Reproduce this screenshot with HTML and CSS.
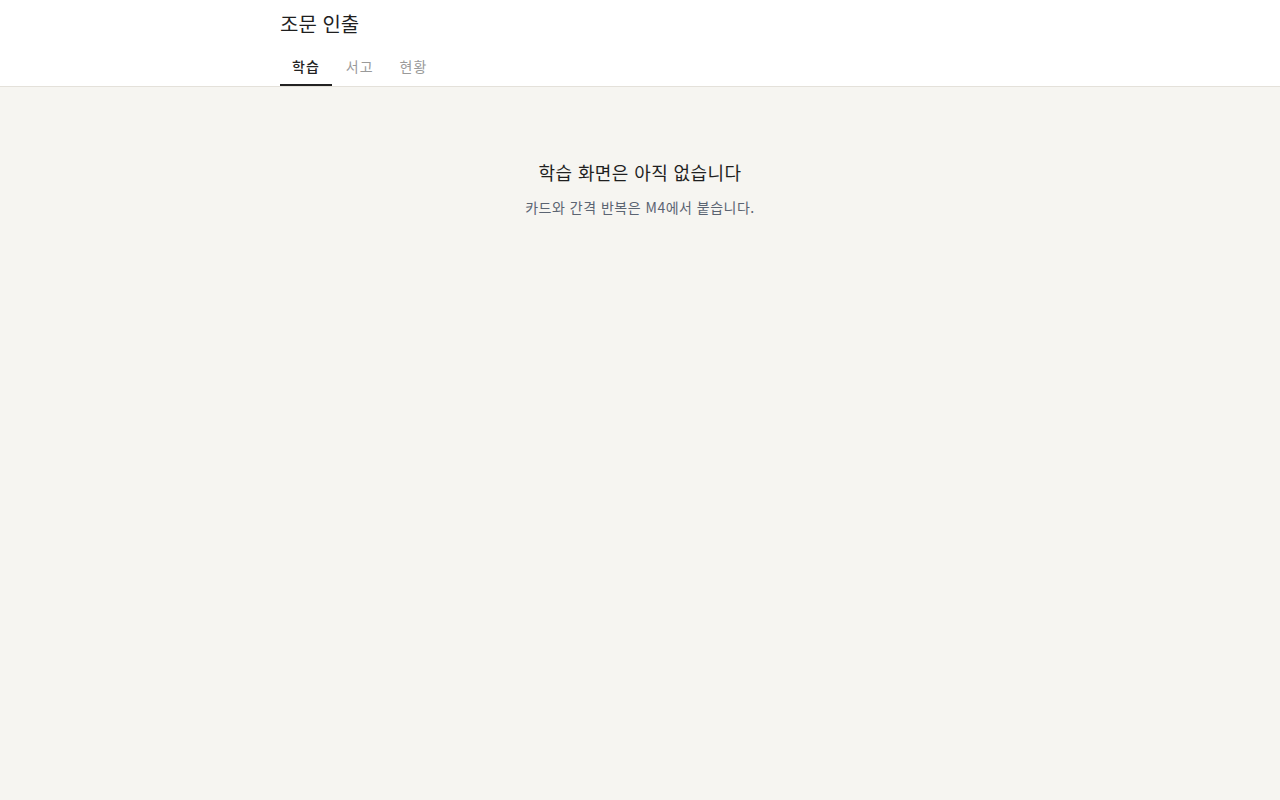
FILE: index.html
```html
<!DOCTYPE html>
<html lang="ko">
<head>
<meta charset="utf-8">
<title>조문 인출</title>
<link rel="stylesheet" href="styles.css">
</head>
<body>
<header class="header">
  <div class="container">
    <h1 class="title">조문 인출</h1>
    <nav class="tabs">
      <a class="tab active">학습</a>
      <a class="tab">서고</a>
      <a class="tab">현황</a>
    </nav>
  </div>
</header>
<main class="main">
  <h2 class="empty-title">학습 화면은 아직 없습니다</h2>
  <p class="empty-text">카드와 간격 반복은 M4에서 붙습니다.</p>
</main>
</body>
</html>
```

FILE: styles.css
```css
html, body {
  margin: 0;
  padding: 0;
  height: 100%;
}
body {
  background: #f6f5f1;
  font-family: "Noto Sans CJK KR", "Noto Sans", sans-serif;
  color: #222;
}
.header {
  background: #ffffff;
  border-bottom: 1px solid #e4e1da;
}
.container {
  width: 720px;
  margin: 0 auto;
  padding-top: 10px;
}
.title {
  margin: 0 0 8px 0;
  font-size: 20px;
  line-height: 28px;
  font-weight: 400;
  color: #1f1f1f;
}
.tabs {
  display: flex;
  gap: 2px;
}
.tab {
  display: block;
  padding: 10px 12px 8px;
  font-size: 14px;
  line-height: 20px;
  letter-spacing: 1px;
  color: #9a9a9a;
  border-bottom: 2px solid transparent;
  cursor: pointer;
}
.tab.active {
  color: #222;
  font-weight: 500;
  border-bottom-color: #222;
}
.main {
  padding-top: 72px;
  text-align: center;
}
.empty-title {
  margin: 0 0 12px 0;
  font-size: 18px;
  line-height: 26px;
  font-weight: 400;
  letter-spacing: 0.4px;
  color: #1f1f1f;
}
.empty-text {
  margin: 0;
  font-size: 14px;
  line-height: 20px;
  letter-spacing: 0.5px;
  color: #5b6472;
}
```
